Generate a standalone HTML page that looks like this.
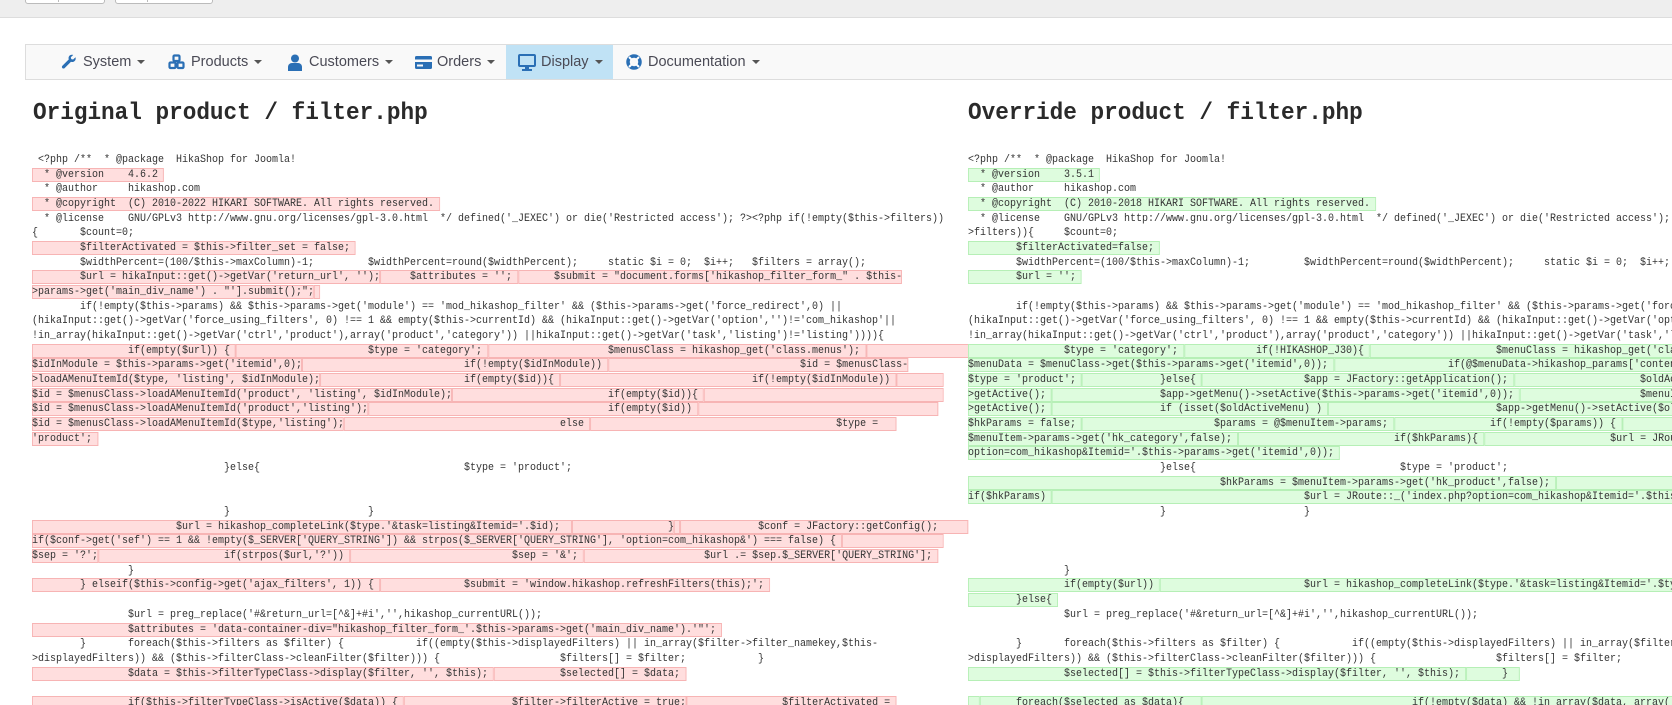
<!DOCTYPE html>
<html><head><meta charset="utf-8">
<style>
html,body{margin:0;padding:0;background:#fff;width:1672px;height:705px;overflow:hidden;position:relative;font-family:"Liberation Sans",Arial,sans-serif}
.top{position:absolute;left:0;top:0;width:1672px;height:17px;background:#eee;border-bottom:1px solid #ddd}
.btn{position:absolute;top:-4px;height:6px;background:#fff;border:1px solid #bbb;border-radius:0 0 3px 3px}
.nav{position:absolute;left:25px;top:44px;width:1660px;height:34px;background:#f9f9f9;border:1px solid #ddd}
.ni{position:absolute;top:0;height:34px;line-height:34px;font-size:14.5px;color:#4a4a55;white-space:nowrap}
.ni svg{position:absolute;top:9px}
.car{display:inline-block;width:0;height:0;border-left:4px solid transparent;border-right:4px solid transparent;border-top:4px solid #555;vertical-align:middle;margin-left:6px}
.act{position:absolute;left:506px;top:45px;width:107px;height:34px;background:#c0e2f5}
h1{position:absolute;margin:0;top:100px;font:bold 24px "Liberation Mono",monospace;color:#2a2a2a;transform:scaleX(.945);transform-origin:0 0;white-space:pre}
.code{position:absolute;top:153px;transform:scaleX(.909);transform-origin:0 0;font:11px/14.68px "Liberation Mono",monospace;color:#333}
.code div{white-space:pre;height:14.68px}
.r,.g{font-style:normal;padding:1px 0}
.r{background:#ffdede;box-shadow:inset 0 0 0 1px #f7b4b4}
.g{background:#defcde;box-shadow:inset 0 0 0 1px #b6efb6}
</style></head><body>
<div class="top"></div>
<div class="btn" style="left:25px;width:78px"></div><div style="position:absolute;left:58px;top:0;width:1px;height:2px;background:#bbb"></div>
<div class="btn" style="left:115px;width:96px"></div><div style="position:absolute;left:147px;top:0;width:1px;height:2px;background:#bbb"></div>

<div class="nav"></div>
<div class="act"></div>
<div class="ni" style="left:61px;top:45px"><svg width="16" height="16" viewBox="0 0 16 16"><path d="M14.5 3.2l-2.4 2.3-1.8-.4-.5-1.8L12.2 1C10.4.4 8.5 1.1 7.8 2.8c-.4.9-.3 1.9 0 2.6L1.4 11.8c-.7.7-.7 1.7 0 2.3.6.6 1.6.6 2.2 0l6.4-6.4c.8.3 1.7.4 2.6 0 1.7-.7 2.5-2.6 1.9-4.5z" fill="#2a6fb5"/></svg><span style="margin-left:22px">System</span><span class="car"></span></div>
<div class="ni" style="left:168px;top:45px"><svg width="18" height="16" viewBox="0 0 18 16"><g fill="none" stroke="#2a6fb5" stroke-width="2.2"><rect x="5.5" y="1.5" width="6" height="5.5" rx="1"/><rect x="1.5" y="8.5" width="6" height="5.5" rx="1"/><rect x="9.5" y="8.5" width="6" height="5.5" rx="1"/></g></svg><span style="margin-left:23px">Products</span><span class="car"></span></div>
<div class="ni" style="left:288px;top:45px"><svg width="14" height="17" viewBox="0 0 14 17"><circle cx="7" cy="4.5" r="4" fill="#2a6fb5"/><path d="M0 17v-4c0-2.5 2-4 4-4h6c2 0 4 1.5 4 4v4z" fill="#2a6fb5"/></svg><span style="margin-left:21px">Customers</span><span class="car"></span></div>
<div class="ni" style="left:415px;top:45px"><svg width="17" height="15" viewBox="0 0 17 15" style="top:10px"><rect x="0" y="1" width="17" height="13" rx="1.5" fill="#2a6fb5"/><rect x="0" y="4.5" width="17" height="2.5" fill="#f9f9f9"/><rect x="2" y="9.5" width="6" height="2" fill="#f9f9f9"/></svg><span style="margin-left:22px">Orders</span><span class="car"></span></div>
<div class="ni" style="left:518px;top:45px"><svg width="18" height="17" viewBox="0 0 18 17"><rect x="1" y="1" width="16" height="11" rx="1" fill="none" stroke="#2a6fb5" stroke-width="2"/><rect x="7" y="12" width="4" height="3" fill="#2a6fb5"/><rect x="4" y="15" width="10" height="2" fill="#2a6fb5"/></svg><span style="margin-left:23px">Display</span><span class="car"></span></div>
<div class="ni" style="left:626px;top:45px"><svg width="16" height="16" viewBox="0 0 16 16"><circle cx="8" cy="8" r="6" fill="none" stroke="#2a6fb5" stroke-width="3.5"/><g stroke="#fff" stroke-width="2"><path d="M3 3l3 3M13 3l-3 3M3 13l3-3M13 13l-3-3"/></g></svg><span style="margin-left:22px">Documentation</span><span class="car"></span></div>

<h1 style="left:33px">Original product / filter.php</h1>
<h1 style="left:968px">Override product / filter.php</h1>

<div class="code" style="left:32px">
<div> &lt;?php /**  * @package  HikaShop for Joomla!</div>
<div><i class="r">  * @version    4.6.2 </i></div>
<div>  * @author     hikashop.com</div>
<div><i class="r">  * @copyright  (C) 2010-2022 HIKARI SOFTWARE. All rights reserved. </i></div>
<div>  * @license    GNU/GPLv3 http://www.gnu.org/licenses/gpl-3.0.html  */ defined('_JEXEC') or die('Restricted access'); ?&gt;&lt;?php if(!empty($this-&gt;filters))</div>
<div>{       $count=0;</div>
<div><i class="r">        $filterActivated = $this-&gt;filter_set = false; </i></div>
<div>        $widthPercent=(100/$this-&gt;maxColumn)-1;         $widthPercent=round($widthPercent);     static $i = 0;  $i++;   $filters = array();</div>
<div><i class="r">        $url = hikaInput::get()-&gt;getVar('return_url', '');</i><i class="r">     $attributes = ''; </i><i class="r">      $submit = "document.forms['hikashop_filter_form_" . $this-</i></div>
<div><i class="r">&gt;params-&gt;get('main_div_name') . "'].submit();";</i><i class="r"> </i></div>
<div>        if(!empty($this-&gt;params) &amp;&amp; $this-&gt;params-&gt;get('module') == 'mod_hikashop_filter' &amp;&amp; ($this-&gt;params-&gt;get('force_redirect',0) ||</div>
<div>(hikaInput::get()-&gt;getVar('force_using_filters', 0) !== 1 &amp;&amp; empty($this-&gt;currentId) &amp;&amp; (hikaInput::get()-&gt;getVar('option','')!='com_hikashop'||</div>
<div>!in_array(hikaInput::get()-&gt;getVar('ctrl','product'),array('product','category')) ||hikaInput::get()-&gt;getVar('task','listing')!='listing')))){</div>
<div><i class="r">                if(empty($url)) { </i><i class="r">                      $type = 'category'; </i><i class="r">                    $menusClass = hikashop_get('class.menus'); </i><i class="r">                    </i></div>
<div><i class="r">$idInModule = $this-&gt;params-&gt;get('itemid',0);</i><i class="r">                           if(!empty($idInModule)) </i><i class="r">                                $id = $menusClass-</i></div>
<div><i class="r">&gt;loadAMenuItemId($type, 'listing', $idInModule);</i><i class="r">                        if(empty($id)){ </i><i class="r">                                if(!empty($idInModule)) </i><i class="r">        </i></div>
<div><i class="r">$id = $menusClass-&gt;loadAMenuItemId('product', 'listing', $idInModule);</i><i class="r">                          if(empty($id)){ </i><i class="r">                                        </i></div>
<div><i class="r">$id = $menusClass-&gt;loadAMenuItemId('product','listing');</i><i class="r">                                        if(empty($id)) </i><i class="r">                                        </i></div>
<div><i class="r">$id = $menusClass-&gt;loadAMenuItemId($type,'listing');</i><i class="r">                                    else </i><i class="r">                                         $type =   </i></div>
<div><i class="r">'product'; </i></div>
<div></div>
<div>                                }else{                                  $type = 'product';</div>
<div></div>
<div></div>
<div>                                }                       }</div>
<div><i class="r">                        $url = hikashop_completeLink($type.'&amp;task=listing&amp;Itemid='.$id);  </i><i class="r">                }</i><i class="r"> </i><i class="r">             $conf = JFactory::getConfig();     </i></div>
<div><i class="r">if($conf-&gt;get('sef') == 1 &amp;&amp; !empty($_SERVER['QUERY_STRING']) &amp;&amp; strpos($_SERVER['QUERY_STRING'], 'option=com_hikashop&amp;') === false) { </i><i class="r">                 </i></div>
<div><i class="r">$sep = '?';</i><i class="r">                     if(strpos($url,'?')) </i><i class="r">                           $sep = '&amp;'; </i><i class="r">                    $url .= $sep.$_SERVER['QUERY_STRING']; </i></div>
<div>                }</div>
<div><i class="r">        } elseif($this-&gt;config-&gt;get('ajax_filters', 1)) { </i><i class="r">              $submit = 'window.hikashop.refreshFilters(this);'; </i></div>
<div></div>
<div>                $url = preg_replace('#&amp;return_url=[^&amp;]+#i','',hikashop_currentURL());</div>
<div><i class="r">                $attributes = 'data-container-div="hikashop_filter_form_'.$this-&gt;params-&gt;get('main_div_name').'"'; </i></div>
<div>        }       foreach($this-&gt;filters as $filter) {            if((empty($this-&gt;displayedFilters) || in_array($filter-&gt;filter_namekey,$this-</div>
<div>&gt;displayedFilters)) &amp;&amp; ($this-&gt;filterClass-&gt;cleanFilter($filter))) {                    $filters[] = $filter;            }</div>
<div><i class="r">                $data = $this-&gt;filterTypeClass-&gt;display($filter, '', $this); </i><i class="r">           $selected[] = $data; </i></div>
<div></div>
<div><i class="r">                if($this-&gt;filterTypeClass-&gt;isActive($data)) { </i><i class="r">                  $filter-&gt;filterActive = true;</i><i class="r">                $filterActivated = </i></div>
</div>

<div class="code" style="left:968px">
<div>&lt;?php /**  * @package  HikaShop for Joomla!</div>
<div><i class="g">  * @version    3.5.1 </i></div>
<div>  * @author     hikashop.com</div>
<div><i class="g">  * @copyright  (C) 2010-2018 HIKARI SOFTWARE. All rights reserved. </i></div>
<div>  * @license    GNU/GPLv3 http://www.gnu.org/licenses/gpl-3.0.html  */ defined('_JEXEC') or die('Restricted access'); ?&gt;&lt;?php if(!empty($this-</div>
<div>&gt;filters)){     $count=0;</div>
<div><i class="g">        $filterActivated=false; </i></div>
<div>        $widthPercent=(100/$this-&gt;maxColumn)-1;         $widthPercent=round($widthPercent);     static $i = 0;  $i++;   $filters = array();</div>
<div><i class="g">        $url = ''; </i></div>
<div></div>
<div>        if(!empty($this-&gt;params) &amp;&amp; $this-&gt;params-&gt;get('module') == 'mod_hikashop_filter' &amp;&amp; ($this-&gt;params-&gt;get('force_redirect',0) ||</div>
<div>(hikaInput::get()-&gt;getVar('force_using_filters', 0) !== 1 &amp;&amp; empty($this-&gt;currentId) &amp;&amp; (hikaInput::get()-&gt;getVar('option','')!='com_hikashop'||</div>
<div>!in_array(hikaInput::get()-&gt;getVar('ctrl','product'),array('product','category')) ||hikaInput::get()-&gt;getVar('task','listing')!='listing')))){</div>
<div><i class="g">                $type = 'category'; </i><i class="g">            if(!HIKASHOP_J30){ </i><i class="g">                     $menuClass = hikashop_get('class.menus');                    </i></div>
<div><i class="g">$menuData = $menuClass-&gt;get($this-&gt;params-&gt;get('itemid',0)); </i><i class="g">                   if(@$menuData-&gt;hikashop_params['content_type']=='product'){                </i></div>
<div><i class="g">$type = 'product'; </i><i class="g">             }else{ </i><i class="g">                 $app = JFactory::getApplication(); </i><i class="g">                     $oldActiveMenu = $app-&gt;getMenu()-</i></div>
<div><i class="g">&gt;getActive(); </i><i class="g">                  $app-&gt;getMenu()-&gt;setActive($this-&gt;params-&gt;get('itemid',0)); </i><i class="g">                    $menuItem = $app-&gt;getMenu()-</i></div>
<div><i class="g">&gt;getActive(); </i><i class="g">                  if (isset($oldActiveMenu) ) </i><i class="g">                            $app-&gt;getMenu()-&gt;setActive($oldActiveMenu-&gt;id);        </i></div>
<div><i class="g">$hkParams = false; </i><i class="g">                      $params = @$menuItem-&gt;params; </i><i class="g">                if(!empty($params)) { </i><i class="g">                                      </i></div>
<div><i class="g">$menuItem-&gt;params-&gt;get('hk_category',false); </i><i class="g">                          if($hkParams){ </i><i class="g">                     $url = JRoute::_('index.php?</i></div>
<div><i class="g">option=com_hikashop&amp;Itemid='.$this-&gt;params-&gt;get('itemid',0)); </i></div>
<div>                                }else{                                  $type = 'product';</div>
<div><i class="g">                                          $hkParams = $menuItem-&gt;params-&gt;get('hk_product',false); </i><i class="g">                                                  </i></div>
<div><i class="g">if($hkParams) </i><i class="g">                                          $url = JRoute::_('index.php?option=com_hikashop&amp;Itemid='.$this-&gt;params-&gt;get('itemid',0));</i></div>
<div>                                }                       }</div>
<div></div>
<div></div>
<div></div>
<div>                }</div>
<div><i class="g">                if(empty($url)) </i><i class="g">                        $url = hikashop_completeLink($type.'&amp;task=listing&amp;Itemid='.$type);      </i></div>
<div><i class="g">        }else{ </i></div>
<div>                $url = preg_replace('#&amp;return_url=[^&amp;]+#i','',hikashop_currentURL());</div>
<div></div>
<div>        }       foreach($this-&gt;filters as $filter) {            if((empty($this-&gt;displayedFilters) || in_array($filter-&gt;filter_namekey,$this-</div>
<div>&gt;displayedFilters)) &amp;&amp; ($this-&gt;filterClass-&gt;cleanFilter($filter))) {                    $filters[] = $filter;</div>
<div><i class="g">                $selected[] = $this-&gt;filterTypeClass-&gt;display($filter, '', $this); </i><i class="g">      }  </i></div>
<div></div>
<div><i class="g">  </i><i class="g">      foreach($selected as $data){   </i><i class="g">                                   if(!empty($data) &amp;&amp; !in_array($data, array(' ', 'none'))) $filterActivated = true;</i></div>
</div>
</body></html>
